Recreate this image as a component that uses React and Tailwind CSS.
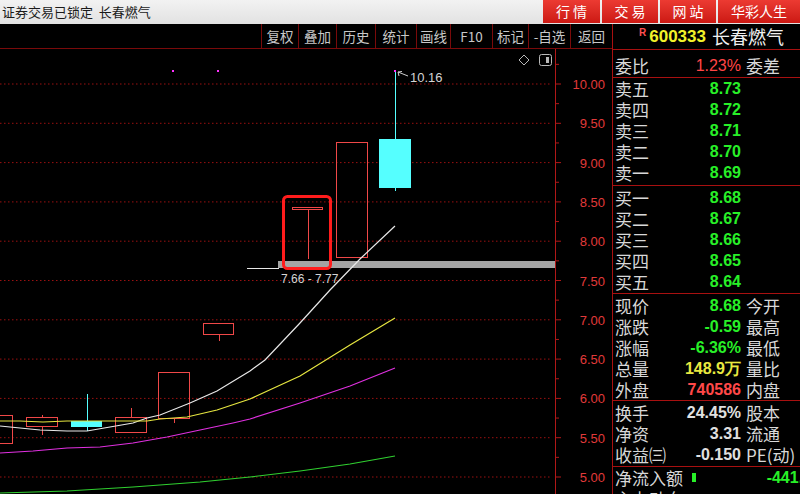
import React from 'react';

const py = (p) => 84 + (10 - p) * 78.6;

const tabs = ['行 情', '交 易', '网 站', '华彩人生'];

const tools = [
  ['复权', 37],
  ['叠加', 38],
  ['历史', 39],
  ['统计', 41],
  ['画线', 34],
  ['F10', 42],
  ['标记', 36],
  ['-自选', 42],
  ['返回', 42],
];

const RED = '#f04848';
const CYAN = '#55ffff';

// x, width, top, bottom, wickTop, wickBottom, filled
const candles = [
  [-20, 33, 415, 444, 415, 444, false],
  [26, 32, 417, 427, 415, 435, false],
  [71, 31, 421, 427, 394, 431, true],
  [115, 32, 417, 433, 408, 433, false],
  [158, 32, 372, 419, 372, 423, false],
  [203, 31, 323, 335, 323, 341, false],
  [292, 31, 207, 210, 207, 259, false],
  [336, 32, 142, 258, 142, 258, false],
  [379, 32, 139, 188, 71, 191, true],
];

const maLines = [
  ['#e8e8e8', '0,426 20,428 40,430 67,431 87,431 110,427 133,423 147,418 160,415 190,403 217,391 250,371 265,360 300,323 330,290 360,259 395,226'],
  ['#e6e640', '0,421 20,421 43,422 67,421 117,421 147,421 160,419 187,417 217,410 250,399 300,376 350,345 395,318'],
  ['#e030e0', '0,453 33,451 67,448 100,447 133,443 167,437 200,430 233,423 250,419 300,403 350,386 395,368'],
  ['#30d030', '0,493 67,491 133,487 200,482 250,477 300,471 350,464 395,456'],
];

const Chart = () => {
  const majors = [];
  for (let i = 0; i <= 10; i++) majors.push(10 - i * 0.5);
  const minors = [10.25];
  for (let i = 0; i < 10; i++) minors.push(9.75 - i * 0.5);

  return (
    <svg width="612" height="445" viewBox="0 49 612 445" className="block">
      {majors.map((p) => (
        <g key={p}>
          <line x1="0" x2="552" y1={py(p)} y2={py(p)} stroke="#9a1010" strokeDasharray="1.5 2.5" />
          <line x1="555" x2="561" y1={py(p)} y2={py(p)} stroke="#b01818" />
          <text x="605" y={py(p) + 5} textAnchor="end" fill="#e03a3a" fontSize="13" fontFamily="Liberation Sans, sans-serif">
            {p.toFixed(2)}
          </text>
        </g>
      ))}
      {minors.map((p) => (
        <line key={p} x1="555" x2="559" y1={py(p)} y2={py(p)} stroke="#b01818" />
      ))}
      <line x1="555.5" x2="555.5" y1="49" y2="494" stroke="#b01818" />

      {/* chart icons */}
      <path d="M524 55 L529 60 L524 65 L519 60 Z" fill="none" stroke="#b8b8b8" />
      <rect x="539.5" y="54.5" width="12" height="11" rx="2" fill="none" stroke="#b8b8b8" />
      <rect x="546" y="57" width="3" height="6" fill="#b8b8b8" />

      {/* support band */}
      <rect x="278" y="261" width="277" height="7" fill="#a4a4a4" />
      <line x1="247" x2="279" y1="268.5" y2="268.5" stroke="#e8e8e8" />

      {candles.map(([x, w, t, b, wt, wb, filled], i) => {
        const c = filled ? CYAN : RED;
        const mid = x + Math.round(w / 2) + 0.5;
        return (
          <g key={i}>
            {wt < t && <line x1={mid} x2={mid} y1={wt} y2={t} stroke={c} />}
            {wb > b && <line x1={mid} x2={mid} y1={b} y2={wb} stroke={c} />}
            {filled ? (
              <rect x={x} y={t} width={w} height={b - t} fill={c} />
            ) : (
              <rect x={x + 0.5} y={t + 0.5} width={w - 1} height={Math.max(b - t - 1, 1)} fill="none" stroke={c} />
            )}
          </g>
        );
      })}

      {maLines.map(([c, pts]) => (
        <polyline key={c} points={pts} fill="none" stroke={c} strokeWidth="1.2" />
      ))}

      {/* highlight box */}
      <rect x="283.5" y="196.5" width="47" height="72" rx="4" fill="none" stroke="#ff1c1c" strokeWidth="3" />

      <rect x="172" y="70" width="2" height="2" fill="#ff30ff" />
      <rect x="217" y="70" width="2" height="2" fill="#ff30ff" />
      <rect x="394" y="70" width="2" height="2" fill="#ff30ff" />

      <path d="M398 72 L408 76 M398 72 L402 71.5 M398 72 L399 76" stroke="#d0d0d0" fill="none" />
      <text x="410" y="82" fill="#d4d4d4" fontSize="13" fontFamily="Liberation Sans, sans-serif">10.16</text>
      <text x="281" y="283" fill="#d4d4d4" fontSize="12" fontFamily="Liberation Sans, sans-serif">7.66 - 7.77</text>
    </svg>
  );
};

const Row = ({ label, value, color = 'text-[#e0e0e0]', right }) => (
  <div className="flex h-[21px] leading-[21px] whitespace-nowrap">
    <div className="w-[128px] flex justify-between pl-[2px]">
      <span className="text-[17px] text-[#d8d8d8]">{label}</span>
      <span className={`font-['Liberation_Sans',sans-serif] font-bold text-[16px] ${color}`}>{value}</span>
    </div>
    {right && <span className="pl-[5px] text-[17px] text-[#d8d8d8]">{right}</span>}
  </div>
);

const green = 'text-[#28f028]';

const QuotePanel = () => (
  <div className="flex-1 border-l border-[#a81010] bg-black overflow-hidden">
    <div className="h-[26px] border-b border-[#a81010] flex items-center whitespace-nowrap">
      <span className="ml-[26px] -mt-[8px] text-[10px] font-bold text-[#ff5050] font-['Liberation_Sans',sans-serif]">R</span>
      <span className="ml-[3px] text-[17px] font-bold text-[#f2f22a] font-['Liberation_Sans',sans-serif]">600333</span>
      <span className="ml-[6px] text-[18px] text-[#f0f0f0]">长春燃气</span>
    </div>
    <div className="h-[28px] border-b border-[#a81010] pt-[5px]">
      <Row label="委比" value="1.23%" color="text-[#ff4545] !font-normal" right="委差" />
    </div>
    <div className="h-[108px] border-b border-[#a81010]">
      <Row label="卖五" value="8.73" color={green} />
      <Row label="卖四" value="8.72" color={green} />
      <Row label="卖三" value="8.71" color={green} />
      <Row label="卖二" value="8.70" color={green} />
      <Row label="卖一" value="8.69" color={green} />
    </div>
    <div className="h-[108px] border-b border-[#a81010] pt-[1px]">
      <Row label="买一" value="8.68" color={green} />
      <Row label="买二" value="8.67" color={green} />
      <Row label="买三" value="8.66" color={green} />
      <Row label="买四" value="8.65" color={green} />
      <Row label="买五" value="8.64" color={green} />
    </div>
    <div className="h-[107px] border-b border-[#a81010] pt-[1px]">
      <Row label="现价" value="8.68" color={green} right="今开" />
      <Row label="涨跌" value="-0.59" color={green} right="最高" />
      <Row label="涨幅" value="-6.36%" color={green} right="最低" />
      <Row label="总量" value="148.9万" color="text-[#e8e840]" right="量比" />
      <Row label="外盘" value="740586" color="text-[#ff4848]" right="内盘" />
    </div>
    <div className="h-[66px] border-b border-[#a81010] pt-[1px]">
      <Row label="换手" value="24.45%" right="股本" />
      <Row label="净资" value="3.31" right="流通" />
      <Row label="收益㈢" value="-0.150" right="PE(动)" />
    </div>
    <div className="flex h-[21px] leading-[21px] whitespace-nowrap pl-[2px] items-center">
      <span className="text-[17px] text-[#d8d8d8]">净流入额</span>
      <span className="ml-[9px] w-[4px] h-[9px] bg-[#28f028]" />
      <span className="ml-auto -mr-[12px] font-['Liberation_Sans',sans-serif] font-bold text-[16px] text-[#28f028]">-441.2</span>
    </div>
    <div className="h-[21px] leading-[21px] pl-[2px] text-[17px] text-[#d8d8d8]">主力动向</div>
  </div>
);

export default function App() {
  return (
    <div className="w-[800px] h-[494px] bg-black overflow-hidden flex flex-col font-['Noto_Sans_CJK_SC',sans-serif]">
      <div className="h-[24px] flex items-stretch bg-gradient-to-b from-[#f2f2f2] to-[#e2e2e2]">
        <div className="flex-1 pl-[2px] leading-[24px] text-[13px] text-[#1a1a1a] whitespace-nowrap">
          证券交易已锁定&nbsp;&nbsp;长春燃气
        </div>
        <div className="flex gap-[2px] pb-[1px]">
          {tabs.map((t, i) => (
            <div
              key={t}
              className={`flex items-center justify-center text-[14px] text-white bg-gradient-to-b from-[#ec3a32] to-[#cc1812] ${
                i === 3 ? 'w-[82px]' : i === 0 ? 'w-[57px]' : 'w-[56px]'
              }`}
            >
              {t}
            </div>
          ))}
        </div>
      </div>
      <div className="flex flex-1 min-h-0">
        <div className="w-[612px] flex flex-col">
          <div className="h-[25px] flex justify-end border-b border-[#7a0a0a]">
            {tools.map(([t, w]) => (
              <div
                key={t}
                style={{ width: w }}
                className="flex items-center justify-center border-l border-[#7a0a0a] text-[13.5px] text-[#c8c8c8] whitespace-nowrap"
              >
                {t}
              </div>
            ))}
          </div>
          <Chart />
        </div>
        <QuotePanel />
      </div>
    </div>
  );
}
